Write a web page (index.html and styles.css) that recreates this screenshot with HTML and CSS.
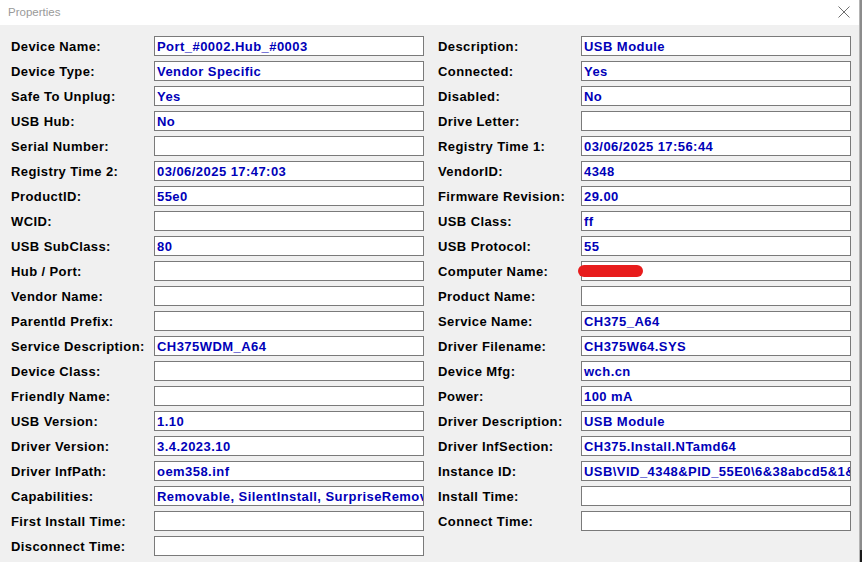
FILE: index.html
```html
<!DOCTYPE html>
<html>
  <head>
    <meta charset="UTF-8" />
    <title>Properties</title>
    <link rel="stylesheet" href="styles.css">
  </head>
  <body>
    <div class="window">
      <div class="titlebar">
        <span class="title">Properties</span>
        <svg class="close" width="12" height="12" viewBox="0 0 12 12">
          <path d="M0.5 0.5 L11.5 11.5 M11.5 0.5 L0.5 11.5" stroke="#6f6f6f" stroke-width="1" fill="none" />
        </svg>
      </div>

      <div class="content">
        <div class="col">
          <div class="row"><label>Device Name:</label><div class="field">Port_#0002.Hub_#0003</div></div>
          <div class="row"><label>Device Type:</label><div class="field">Vendor Specific</div></div>
          <div class="row"><label>Safe To Unplug:</label><div class="field">Yes</div></div>
          <div class="row"><label>USB Hub:</label><div class="field">No</div></div>
          <div class="row"><label>Serial Number:</label><div class="field"></div></div>
          <div class="row"><label>Registry Time 2:</label><div class="field">03/06/2025 17:47:03</div></div>
          <div class="row"><label>ProductID:</label><div class="field">55e0</div></div>
          <div class="row"><label>WCID:</label><div class="field"></div></div>
          <div class="row"><label>USB SubClass:</label><div class="field">80</div></div>
          <div class="row"><label>Hub / Port:</label><div class="field"></div></div>
          <div class="row"><label>Vendor Name:</label><div class="field"></div></div>
          <div class="row"><label>ParentId Prefix:</label><div class="field"></div></div>
          <div class="row"><label>Service Description:</label><div class="field">CH375WDM_A64</div></div>
          <div class="row"><label>Device Class:</label><div class="field"></div></div>
          <div class="row"><label>Friendly Name:</label><div class="field"></div></div>
          <div class="row"><label>USB Version:</label><div class="field">1.10</div></div>
          <div class="row"><label>Driver Version:</label><div class="field">3.4.2023.10</div></div>
          <div class="row"><label>Driver InfPath:</label><div class="field">oem358.inf</div></div>
          <div class="row"><label>Capabilities:</label><div class="field">Removable, SilentInstall, SurpriseRemovalOK</div></div>
          <div class="row"><label>First Install Time:</label><div class="field"></div></div>
          <div class="row"><label>Disconnect Time:</label><div class="field"></div></div>
        </div>

        <div class="col">
          <div class="row"><label>Description:</label><div class="field">USB Module</div></div>
          <div class="row"><label>Connected:</label><div class="field">Yes</div></div>
          <div class="row"><label>Disabled:</label><div class="field">No</div></div>
          <div class="row"><label>Drive Letter:</label><div class="field"></div></div>
          <div class="row"><label>Registry Time 1:</label><div class="field">03/06/2025 17:56:44</div></div>
          <div class="row"><label>VendorID:</label><div class="field">4348</div></div>
          <div class="row"><label>Firmware Revision:</label><div class="field">29.00</div></div>
          <div class="row"><label>USB Class:</label><div class="field">ff</div></div>
          <div class="row"><label>USB Protocol:</label><div class="field">55</div></div>
          <div class="row"><label>Computer Name:</label><div class="field redacted-field"><span class="redacted"></span></div></div>
          <div class="row"><label>Product Name:</label><div class="field"></div></div>
          <div class="row"><label>Service Name:</label><div class="field">CH375_A64</div></div>
          <div class="row"><label>Driver Filename:</label><div class="field">CH375W64.SYS</div></div>
          <div class="row"><label>Device Mfg:</label><div class="field">wch.cn</div></div>
          <div class="row"><label>Power:</label><div class="field">100 mA</div></div>
          <div class="row"><label>Driver Description:</label><div class="field">USB Module</div></div>
          <div class="row"><label>Driver InfSection:</label><div class="field">CH375.Install.NTamd64</div></div>
          <div class="row"><label>Instance ID:</label><div class="field">USB\VID_4348&amp;PID_55E0\6&amp;38abcd5&amp;1&amp;2</div></div>
          <div class="row"><label>Install Time:</label><div class="field"></div></div>
          <div class="row"><label>Connect Time:</label><div class="field"></div></div>
        </div>
      </div>
    </div>
  </body>
</html>
```

FILE: styles.css
```css
:root {
  --dialog-bg: #f0f0f0;
  --title-bg: #ffffff;
  --title-color: #9a9a9a;
  --label-color: #000000;
  --value-color: #0000b8;
  --field-border: #7a7a7a;
  --redact: #e81c1c;
}

html,
body {
  margin: 0;
  padding: 0;
  height: 100%;
  overflow: hidden;
}

body {
  background: linear-gradient(to bottom, #8c8c8c 550px, #1a1a1a 550px);
  font-family: "Liberation Sans", Arial, sans-serif;
}

.window {
  width: 860px;
  height: 100%;
  background: var(--dialog-bg);
  border-right: 1px solid #b4b4b4;
  box-sizing: border-box;
}

.titlebar {
  height: 25px;
  background: var(--title-bg);
  display: flex;
  align-items: center;
  justify-content: space-between;
  padding: 0 9px 0 8px;
}

.title {
  font-size: 11.5px;
  color: var(--title-color);
  margin-top: -1px;
}

.close {
  margin-top: -1px;
}

.content {
  display: flex;
  gap: 14px;
  padding: 11px 0 0 11px;
}

.col {
  display: flex;
  flex-direction: column;
  gap: 5px;
}

.row {
  display: flex;
  align-items: center;
  height: 20px;
}

.row label {
  width: 143px;
  flex: none;
  font-size: 13px;
  font-weight: bold;
  letter-spacing: 0.4px;
  color: var(--label-color);
  line-height: 20px;
  padding-top: 1px;
}

.field {
  width: 270px;
  height: 20px;
  box-sizing: border-box;
  border: 1px solid var(--field-border);
  background: #ffffff;
  padding: 1px 2px 0 2px;
  font-size: 13px;
  font-weight: bold;
  letter-spacing: 0.45px;
  color: var(--value-color);
  line-height: 17px;
  white-space: nowrap;
  overflow: hidden;
}

.redacted-field {
  position: relative;
  overflow: visible;
}

.redacted {
  position: absolute;
  left: -4px;
  top: 3px;
  width: 65px;
  height: 12px;
  border-radius: 6px;
  background: var(--redact);
}
```
